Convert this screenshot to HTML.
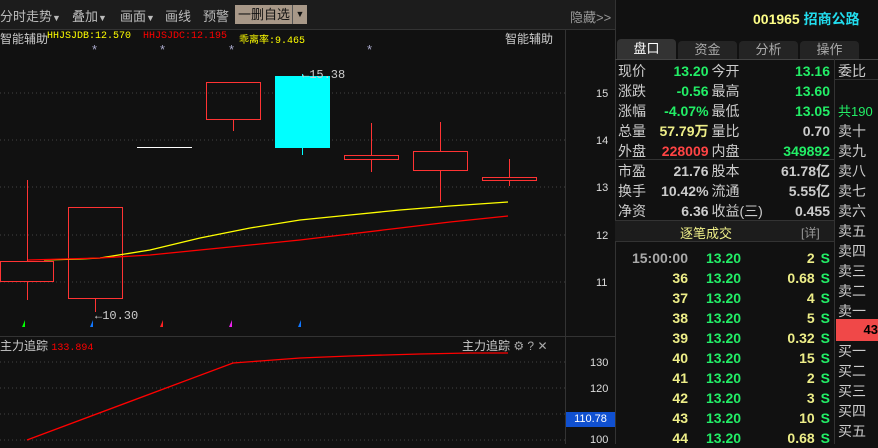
<!DOCTYPE html>
<html><head><meta charset="utf-8"><style>
*{margin:0;padding:0;box-sizing:border-box}
body{width:878px;height:444px;background:#111;overflow:hidden;position:relative;font-family:"Liberation Sans","Noto Sans CJK SC",sans-serif;color:#ccc}
.a{position:absolute;white-space:nowrap}
.m{font-family:"Liberation Mono","Noto Sans CJK SC",monospace}
</style></head><body>
<div class="a" style="left:0;top:0;width:615px;height:30px;background:#1c1c1c;border-bottom:1px solid #333"></div>
<div class="a" style="left:0;top:6px;font-size:13px;color:#bbb">分时走势<span style="font-size:9px">▼</span></div>
<div class="a" style="left:72px;top:6px;font-size:13px;color:#bbb">叠加<span style="font-size:9px">▼</span></div>
<div class="a" style="left:120px;top:6px;font-size:13px;color:#bbb">画面<span style="font-size:9px">▼</span></div>
<div class="a" style="left:165px;top:6px;font-size:13px;color:#bbb">画线</div>
<div class="a" style="left:203px;top:6px;font-size:13px;color:#bbb">预警</div>
<div class="a" style="left:235px;top:5px;width:57px;height:19px;background:#a89888;color:#111;font-size:13px;padding-left:3px;line-height:19px">一删自选</div>
<div class="a" style="left:292px;top:5px;width:15px;height:19px;background:#a89888;border-left:1px solid #555;color:#111;font-size:9px;text-align:center;line-height:19px">▼</div>
<div class="a" style="left:570px;top:7px;font-size:13px;color:#999">隐藏&gt;&gt;</div>
<div class="a" style="left:0;top:30px;font-size:12px;color:#ccc">智能辅助</div>
<div class="a m" style="left:47px;top:31px;font-size:10px;color:#ff0">HHJSJDB:12.570</div>
<div class="a m" style="left:143px;top:31px;font-size:10px;color:#f00">HHJSJDC:12.195</div>
<div class="a m" style="left:239px;top:31px;font-size:10px;color:#ff0">乖离率:9.465</div>
<div class="a" style="left:505px;top:30px;font-size:12px;color:#ccc">智能辅助</div>
<div class="a" style="left:92px;top:42px;font-size:13px;color:#aac">*</div>
<div class="a" style="left:160px;top:42px;font-size:13px;color:#aac">*</div>
<div class="a" style="left:229px;top:42px;font-size:13px;color:#aac">*</div>
<div class="a" style="left:367px;top:42px;font-size:13px;color:#aac">*</div>
<svg class="a" style="left:0;top:0" width="615" height="444">
<g stroke="#444" stroke-dasharray="1,3">
<line x1="0" y1="93" x2="565" y2="93"/><line x1="0" y1="140" x2="565" y2="140"/><line x1="0" y1="187" x2="565" y2="187"/><line x1="0" y1="235" x2="565" y2="235"/><line x1="0" y1="282" x2="565" y2="282"/>
<line x1="0" y1="362" x2="565" y2="362"/><line x1="0" y1="388" x2="565" y2="388"/><line x1="0" y1="414" x2="565" y2="414"/><line x1="0" y1="440" x2="565" y2="440"/>
</g>
<line x1="565.5" y1="30" x2="565.5" y2="444" stroke="#333"/>
<line x1="0" y1="336.5" x2="615" y2="336.5" stroke="#333"/>
<g stroke="#f33" fill="none">
<line x1="27.5" y1="180" x2="27.5" y2="300"/><rect x="0.5" y="261.5" width="53" height="20" fill="#111"/>
<line x1="95.5" y1="298" x2="95.5" y2="312"/><rect x="68.5" y="207.5" width="54" height="91"/>
<line x1="233.5" y1="119" x2="233.5" y2="131"/><rect x="206.5" y="82.5" width="54" height="37"/>
<line x1="371.5" y1="123" x2="371.5" y2="172"/><rect x="344.5" y="155.5" width="54" height="4" fill="#111"/>
<line x1="440.5" y1="122" x2="440.5" y2="202"/><rect x="413.5" y="151.5" width="54" height="19" fill="#111"/>
<line x1="509.5" y1="159" x2="509.5" y2="186"/><rect x="482.5" y="177.5" width="54" height="3" fill="#111"/>
</g>
<line x1="137" y1="147.5" x2="192" y2="147.5" stroke="#fff"/>
<line x1="302.5" y1="74" x2="302.5" y2="155" stroke="#0ff"/><rect x="275" y="76" width="55" height="72" fill="#0ff"/>
<polyline fill="none" stroke="#ff0" stroke-width="1.3" points="44,260 80,259 100,258 150,250 200,238 250,228 300,220 350,215 400,210 450,206 508,202"/>
<polyline fill="none" stroke="#f00" stroke-width="1.3" points="28,260 100,258 150,255 200,250 250,245 300,240 350,234 400,228 450,222 508,216"/>
<g font-size="12" fill="#ccc" font-family="Liberation Mono,monospace">
<text x="302" y="78">←15.38</text><text x="95" y="319">←10.30</text>
</g>
<g font-size="11" fill="#ddd" font-family="Liberation Sans,sans-serif">
<text x="596" y="97">15</text><text x="596" y="144">14</text><text x="596" y="191">13</text><text x="596" y="239">12</text><text x="596" y="286">11</text>
<text x="590" y="366">130</text><text x="590" y="392">120</text><text x="590" y="443">100</text>
</g>
<path d="M22 327 l3-7 v7z" fill="#0f0"/><path d="M90 327 l3-7 v7z" fill="#17f"/><path d="M160 327 l3-7 v7z" fill="#f22"/><path d="M229 327 l3-7 v7z" fill="#e2e"/><path d="M298 327 l3-7 v7z" fill="#17f"/>
<polyline fill="none" stroke="#f00" stroke-width="1.3" points="27,440 233,363 260,361 300,358 350,356 420,354 470,353 508,353"/>
</svg>
<div class="a" style="left:0;top:337px;font-size:12px;color:#ccc">主力追踪 <span class="m" style="color:#f00;font-size:10px">133.894</span></div>
<div class="a" style="left:462px;top:337px;font-size:12px;color:#ccc">主力追踪 <span style="color:#aaa">⚙ ? ✕</span></div>
<div class="a" style="left:566px;top:412px;width:49px;height:15px;background:#1050d0;color:#fff;font-size:11px;text-align:center;line-height:15px">110.78</div>
<div class="a" style="left:615px;top:0;width:263px;height:444px;background:#111;border-left:1px solid #333"></div>
<div class="a" style="left:753px;top:9px;font-size:14px;font-weight:bold;color:#ff8">001965 <span style="color:#2de">招商公路</span></div>
<div class="a" style="left:617px;top:39px;width:59px;height:20px;background:#333;border-radius:4px 4px 0 0;color:#fff;font-size:13px;text-align:center;line-height:20px">盘口</div>
<div class="a" style="left:678px;top:41px;width:59px;height:18px;background:#242424;border-radius:4px 4px 0 0;color:#aaa;font-size:13px;text-align:center;line-height:18px">资金</div>
<div class="a" style="left:739px;top:41px;width:59px;height:18px;background:#242424;border-radius:4px 4px 0 0;color:#aaa;font-size:13px;text-align:center;line-height:18px">分析</div>
<div class="a" style="left:800px;top:41px;width:59px;height:18px;background:#242424;border-radius:4px 4px 0 0;color:#aaa;font-size:13px;text-align:center;line-height:18px">操作</div>
<div class="a" style="left:615px;top:59px;width:263px;border-top:1px solid #444"></div>
<div class="a" style="left:834px;top:59px;height:385px;border-left:1px solid #333"></div>
<div class="a" style="left:615px;top:159px;width:219px;border-top:1px solid #333"></div>
<div class="a" style="left:615px;top:220px;width:219px;height:22px;background:#1c1c1c;border-top:1px solid #333;border-bottom:1px solid #333"></div>
<div class="a" style="left:680px;top:223px;font-size:13px;color:#ee8">逐笔成交</div>
<div class="a" style="left:801px;top:224px;font-size:12px;color:#999">[详]</div>
<table class="a" style="left:618px;top:61px;width:212px;border-collapse:collapse;font-size:14px;line-height:20px">
<tr><td style="color:#ccc">现价</td><td style="text-align:right;color:#2e6;font-weight:bold">13.20</td><td style="color:#ccc;padding-left:3px">今开</td><td style="text-align:right;color:#2e6;font-weight:bold">13.16</td></tr>
<tr><td>涨跌</td><td style="text-align:right;color:#2e6;font-weight:bold">-0.56</td><td style="padding-left:3px">最高</td><td style="text-align:right;color:#2e6;font-weight:bold">13.60</td></tr>
<tr><td>涨幅</td><td style="text-align:right;color:#2e6;font-weight:bold">-4.07%</td><td style="padding-left:3px">最低</td><td style="text-align:right;color:#2e6;font-weight:bold">13.05</td></tr>
<tr><td>总量</td><td style="text-align:right;color:#ee8;font-weight:bold">57.79万</td><td style="padding-left:3px">量比</td><td style="text-align:right;color:#ccc;font-weight:bold">0.70</td></tr>
<tr><td>外盘</td><td style="text-align:right;color:#f44;font-weight:bold">228009</td><td style="padding-left:3px">内盘</td><td style="text-align:right;color:#2e6;font-weight:bold">349892</td></tr>
<tr><td>市盈</td><td style="text-align:right;font-weight:bold">21.76</td><td style="padding-left:3px">股本</td><td style="text-align:right;font-weight:bold">61.78亿</td></tr>
<tr><td>换手</td><td style="text-align:right;font-weight:bold">10.42%</td><td style="padding-left:3px">流通</td><td style="text-align:right;font-weight:bold">5.55亿</td></tr>
<tr><td>净资</td><td style="text-align:right;font-weight:bold">6.36</td><td style="padding-left:3px">收益(三)</td><td style="text-align:right;font-weight:bold">0.455</td></tr>
</table>
<table class="a" style="left:618px;top:248px;width:212px;border-collapse:collapse;font-size:14px;line-height:20px;font-weight:bold">
<tr><td style="text-align:right;color:#aaa;width:70px">15:00:00</td><td style="color:#2e6;padding-left:18px">13.20</td><td style="text-align:right;color:#ee8">2</td><td style="color:#2e6;padding-left:6px;width:14px">S</td></tr>
<tr><td style="text-align:right;color:#ee8">36</td><td style="color:#2e6;padding-left:18px">13.20</td><td style="text-align:right;color:#ee8">0.68</td><td style="color:#2e6;padding-left:6px">S</td></tr>
<tr><td style="text-align:right;color:#ee8">37</td><td style="color:#2e6;padding-left:18px">13.20</td><td style="text-align:right;color:#ee8">4</td><td style="color:#2e6;padding-left:6px">S</td></tr>
<tr><td style="text-align:right;color:#ee8">38</td><td style="color:#2e6;padding-left:18px">13.20</td><td style="text-align:right;color:#ee8">5</td><td style="color:#2e6;padding-left:6px">S</td></tr>
<tr><td style="text-align:right;color:#ee8">39</td><td style="color:#2e6;padding-left:18px">13.20</td><td style="text-align:right;color:#ee8">0.32</td><td style="color:#2e6;padding-left:6px">S</td></tr>
<tr><td style="text-align:right;color:#ee8">40</td><td style="color:#2e6;padding-left:18px">13.20</td><td style="text-align:right;color:#ee8">15</td><td style="color:#2e6;padding-left:6px">S</td></tr>
<tr><td style="text-align:right;color:#ee8">41</td><td style="color:#2e6;padding-left:18px">13.20</td><td style="text-align:right;color:#ee8">2</td><td style="color:#2e6;padding-left:6px">S</td></tr>
<tr><td style="text-align:right;color:#ee8">42</td><td style="color:#2e6;padding-left:18px">13.20</td><td style="text-align:right;color:#ee8">3</td><td style="color:#2e6;padding-left:6px">S</td></tr>
<tr><td style="text-align:right;color:#ee8">43</td><td style="color:#2e6;padding-left:18px">13.20</td><td style="text-align:right;color:#ee8">10</td><td style="color:#2e6;padding-left:6px">S</td></tr>
<tr><td style="text-align:right;color:#ee8">44</td><td style="color:#2e6;padding-left:18px">13.20</td><td style="text-align:right;color:#ee8">0.68</td><td style="color:#2e6;padding-left:6px">S</td></tr>
</table>
<div class="a" style="left:838px;top:61px;font-size:14px;line-height:20px;color:#ccc">委比</div>
<div class="a" style="left:835px;top:79px;width:43px;border-top:1px solid #333"></div>
<div class="a" style="left:838px;top:101px;font-size:13px;color:#2e6">共190</div>
<div class="a" style="left:838px;top:121px;font-size:14px;line-height:20px;color:#ccc">卖十<br>卖九<br>卖八<br>卖七<br>卖六<br>卖五<br>卖四<br>卖三<br>卖二<br>卖一</div>
<div class="a" style="left:836px;top:319px;width:42px;height:22px;background:#f04848;color:#000;font-weight:bold;font-size:13px;text-align:right;line-height:22px">43</div>
<div class="a" style="left:838px;top:341px;font-size:14px;line-height:20px;color:#ccc">买一<br>买二<br>买三<br>买四<br>买五</div>
</body></html>
